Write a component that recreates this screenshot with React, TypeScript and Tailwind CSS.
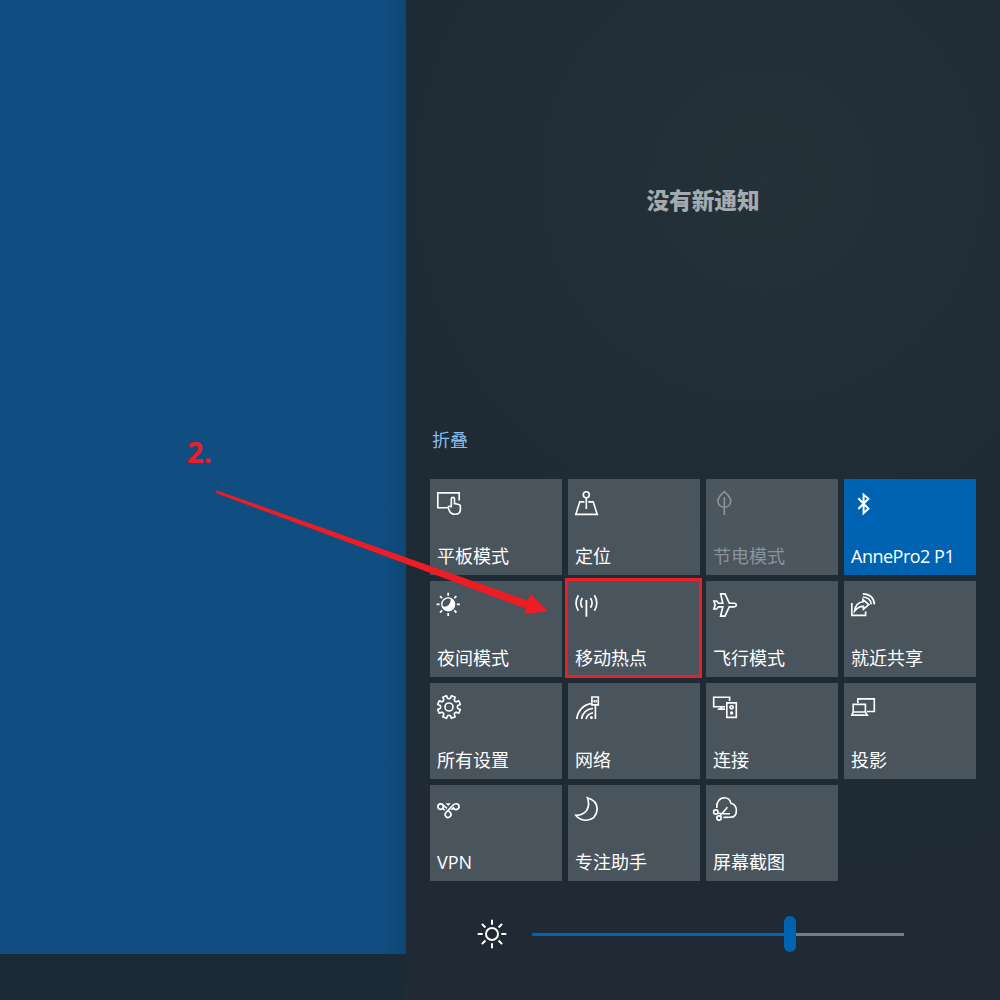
import React from "react";

const gearPath = (() => {
  const cx = 19;
  const cy = 24;
  const pts: string[] = [];
  const n = 8;
  const at = (r: number, deg: number) => {
    const a = (deg * Math.PI) / 180;
    return `${(cx + r * Math.cos(a)).toFixed(2)} ${(cy + r * Math.sin(a)).toFixed(2)}`;
  };
  for (let i = 0; i < n; i++) {
    const c = i * 45 + 22.5;
    pts.push(`${i ? "L" : "M"}${at(8.9, c - 13)}L${at(11.6, c - 10)}L${at(11.6, c + 10)}L${at(8.9, c + 13)}`);
    pts.push(`Q${at(7.8, c + 22.5)} ${at(8.9, c + 32)}`);
  }
  return pts.join("") + "Z";
})();

const rays = (cx: number, cy: number, r1: number, r2: number) =>
  Array.from({ length: 8 }, (_, i) => {
    const a = (i * Math.PI) / 4;
    return `M${cx + r1 * Math.cos(a)} ${cy + r1 * Math.sin(a)}L${cx + r2 * Math.cos(a)} ${cy + r2 * Math.sin(a)}`;
  }).join("");

const icons: Record<string, React.ReactNode> = {
  tablet: (
    <>
      <path d="M17.5 28.7H7.8V13.8H29.2V21.5" />
      <path d="M21.3 28.5V20a1.6 1.6 0 0 1 3.2 0v4.6l3.6 .6q2.3 .4 2.3 2.6v2.4q0 5-5.2 5q-4.2 0-5.8-3.4l-1.4-3.4q.6-2 3.3-.6" />
    </>
  ),
  location: (
    <>
      <circle cx="18.3" cy="15.7" r="3" />
      <path d="M18.3 18.7V30M16.4 22.8H11.8L7.8 35.3H29.2L25.2 22.8H20.2" />
    </>
  ),
  leaf: <path d="M18.3 12.6C15 15.5 12 18 12 22C12 26 15 28.2 18.3 28.2S24.7 26 24.7 22C24.7 18 21.6 15.5 18.3 12.6ZM18.3 18V36" />,
  bluetooth: <path strokeWidth="2" d="M14.3 19.2L24.4 29.6L19.6 34.2V15.6L24.4 19.8L14.3 30" />,
  night: (
    <>
      <path d={rays(18.2, 23.3, 8.6, 11.6)} strokeWidth="1.8" />
      <circle cx="18.2" cy="23.3" r="6.4" strokeWidth="1.3" />
      <path fill="currentColor" stroke="none" d="M20.4 17.1A6.7 6.7 0 1 1 12 25.3Q16 26.6 18.6 24Q21.2 21 20.4 17.1Z" />
    </>
  ),
  hotspot: (
    <>
      <path d="M18.4 19V35.7" strokeWidth="1.8" />
      <path d="M10.4 14.2Q5.6 22 10.4 29.8M14.4 17Q11 22 14.4 26.8M26.4 14.2Q31.2 22 26.4 29.8M22.4 17Q25.8 22 22.4 26.8" />
    </>
  ),
  plane: <path d="M28.5 22.2H23.3L19 12.9H14.6L16.8 22.2H12.5L10.6 20H7.9L9.2 24L7.9 28H10.6L12.5 25.8H16.8L14.6 35.1H19L23.3 25.8H28.5Q30.3 25.6 30.3 24T28.5 22.2Z" />,
  share: (
    <>
      <path d="M7.8 22V34.3H21.6V30.5" />
      <path d="M10.6 30Q11.5 21.6 19 20.8V18.6L24.8 23.6L19.4 28.2V25.4Q14 25.4 10.6 30Z" />
      <path d="M18.7 12.9Q29.6 13.2 30.4 23.4M18.7 16Q26.6 16.4 27.3 23.4" />
    </>
  ),
  gear: (
    <>
      <path d={gearPath} strokeLinejoin="round" />
      <circle cx="19" cy="24" r="4" />
    </>
  ),
  network: (
    <>
      <path d="M8.8 36C9.6 27.5 15.5 21.8 23 20.6M13.6 36C14.3 30.4 18.6 26.3 25 25.3M18.1 36C18.7 32.6 21.3 30.4 25 29.7" />
      <circle cx="23.4" cy="34.6" r="1.5" fill="currentColor" stroke="none" />
      <path d="M27.4 22V36M23.9 14H30.3V21.8H23.9Z" />
      <path d="M25.8 17.6H28.6V19H25.8Z" strokeWidth="1" />
    </>
  ),
  connect: (
    <>
      <path d="M19 23.7H7.7V14.2H23.6V18M15.2 23.7V26M11.8 26.1H19" />
      <path d="M20.8 19.8H30.3V34.3H20.8Z" />
      <circle cx="25.6" cy="24.3" r="1.6" />
      <circle cx="25.6" cy="30" r="1.7" fill="currentColor" stroke="none" />
    </>
  ),
  project: <path d="M13.8 20V15.8H30.3V28.5H23M9.2 21.3H21.4V29H9.2ZM9.2 29L7.9 32.1H23.3L21.4 29" />,
  vpn: (
    <>
      <circle cx="10.6" cy="21.6" r="2.7" />
      <path d="M12.4 19.6L17 23.4M12.6 23.6L14.8 25.2" />
      <path d="M15.9 27.6L23.2 20Q24.4 18.7 26.2 18.7A2.9 2.9 0 1 1 23.5 22.8L21.4 24.8" />
      <path d="M15.9 27.6A2.9 2.9 0 1 0 20.4 27.8L18.6 25.8" />
      <path d="M15.6 18.2H20.8L18.2 21Z" fill="currentColor" stroke="none" />
    </>
  ),
  moon: <path d="M19.4 12.8Q29.2 15.6 29.2 24.2Q28.2 34.8 18.4 35.2Q11.6 35.2 8 30.4Q14.8 30.6 18.6 25.6Q22.2 20 19.4 12.8Z" />,
  snip: (
    <>
      <path d="M10.8 23C10.2 17 13.5 12.8 18.4 12.8Q23.8 12.8 24.8 18.2Q30.4 19.6 30.4 25.2Q30.4 32.2 24.6 32.3H17.4" />
      <circle cx="9.8" cy="27" r="2.2" />
      <circle cx="13" cy="33.1" r="2.2" />
      <path d="M11.6 28.2L16.5 28.7H24M13.8 31.2L21.4 22.2" />
    </>
  ),
};

const tiles: { icon: string; label: string; state?: "on" | "off" | "marked" }[] = [
  { icon: "tablet", label: "平板模式" },
  { icon: "location", label: "定位" },
  { icon: "leaf", label: "节电模式", state: "off" },
  { icon: "bluetooth", label: "AnnePro2 P1", state: "on" },
  { icon: "night", label: "夜间模式" },
  { icon: "hotspot", label: "移动热点", state: "marked" },
  { icon: "plane", label: "飞行模式" },
  { icon: "share", label: "就近共享" },
  { icon: "gear", label: "所有设置" },
  { icon: "network", label: "网络" },
  { icon: "connect", label: "连接" },
  { icon: "project", label: "投影" },
  { icon: "vpn", label: "VPN" },
  { icon: "moon", label: "专注助手" },
  { icon: "snip", label: "屏幕截图" },
];

function Tile({ icon, label, state }: (typeof tiles)[number]) {
  const tone =
    state === "on"
      ? "bg-[#0063b1] text-white tracking-[-0.5px]"
      : state === "off"
        ? "bg-[#4b565f] text-[#8b9299]"
        : "bg-[#49545d] text-white";
  return (
    <div className={`relative flex h-24 flex-col justify-between ${tone}`}>
      <svg
        className="h-10 w-10"
        viewBox="0 0 40 40"
        fill="none"
        stroke="currentColor"
        strokeWidth="1.65"
      >
        {icons[icon]}
      </svg>
      <span className="pb-1.5 pl-[7px] text-[18px] leading-[26px] whitespace-nowrap">{label}</span>
      {state === "marked" && (
        <div className="absolute -top-[3px] -right-[2px] -bottom-px -left-[3px] border-3 border-[#ee1c25]" />
      )}
    </div>
  );
}

export default function App() {
  return (
    <div className="relative flex h-[1000px] w-[1000px] overflow-hidden bg-[#1f2b35] font-['Open_Sans','Noto_Sans_CJK_SC',sans-serif]">
      <div className="flex w-[406px] flex-col">
        <div className="flex h-[954px] justify-end bg-[#104d81]">
          <div className="w-6 bg-linear-to-r from-transparent to-[#0d4675]" />
        </div>
        <div className="flex-1 bg-[#1c2a35]" />
      </div>

      <div className="flex w-[594px] flex-col bg-[radial-gradient(circle_at_60%_18%,#243139_0%,#212e38_22%,#1e2b34_48%,#1e2a34_70%,#222a34_100%)] px-6">
        <div className="flex h-[425px] justify-center pt-[185px] text-[22.6px] leading-8 font-black text-[#a5aaae]">
          没有新通知
        </div>
        <div className="h-[54px] pl-0.5 text-[18px] leading-[30px] text-[#83bdf2]">折叠</div>
        <div className="grid grid-cols-4 gap-1.5">
          {tiles.map((t) => (
            <Tile key={t.icon} {...t} />
          ))}
        </div>
        <div className="mt-[33px] flex h-10 items-center pl-[46px]">
          <svg className="h-8 w-8 text-white" viewBox="0 0 32 32" fill="none" stroke="currentColor" strokeWidth="2">
            <circle cx="16" cy="16" r="6" />
            <path d={rays(16, 16, 9.3, 14.3)} />
          </svg>
          <div className="ml-6 flex w-[372px] items-center">
            <div className="h-[3px] w-[252px] bg-[#0063b1]" />
            <div className="h-9 w-3 rounded-full bg-[#0063b1]" />
            <div className="h-[3px] flex-1 bg-[#797d82]" />
          </div>
        </div>
      </div>

      <div className="absolute top-[432px] left-[187px] text-[29px] leading-10 font-bold text-[#ee1c25]">2.</div>
      <svg className="pointer-events-none absolute inset-0 h-[1000px] w-[1000px]" viewBox="0 0 1000 1000">
        <path d="M217 490.4L527.6 600.6L530.7 594.3L548 611.5L523.7 614L526.3 608.8L217 493.4Q214.6 490.8 217 490.4Z" fill="#ee1c25" />
      </svg>
    </div>
  );
}
